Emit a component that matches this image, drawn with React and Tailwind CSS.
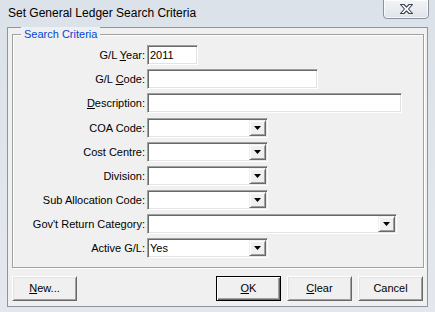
import React from "react";

const FONT = { fontFamily: '"Liberation Sans", Arial, sans-serif' };

const sunken =
  "border border-t-[#a0a0a0] border-l-[#a0a0a0] border-b-white border-r-white shadow-[inset_1px_1px_0_#696969,inset_-1px_-1px_0_#e3e3e3] bg-white";

const raised =
  "border border-t-white border-l-white border-b-[#696969] border-r-[#696969] shadow-[inset_1px_1px_0_#e3e3e3,inset_-1px_-1px_0_#a0a0a0] bg-[#f0f0f0]";

function Key({ children }) {
  return <span className="underline underline-offset-[1px]">{children}</span>;
}

function Row({ label, children, className = "" }) {
  return (
    <div className={`flex items-center h-[20px] ${className}`}>
      <div className="w-[133px] text-right leading-[20px] pr-[1px] whitespace-nowrap">{label}</div>
      <div className="ml-[1px] flex">{children}</div>
    </div>
  );
}

function TextBox({ width, value }) {
  return (
    <div className={`${sunken} h-[20px] pl-[2px] leading-[18px] ${width}`}>{value}</div>
  );
}

function Combo({ width, value }) {
  return (
    <div className={`${sunken} h-[20px] p-[1px] flex ${width}`}>
      <div className="flex-1 pl-[1px] leading-[16px]">{value}</div>
      <div className="w-[17px] h-[16px] border border-t-[#f0f0f0] border-l-[#f0f0f0] border-b-[#696969] border-r-[#696969] shadow-[inset_1px_1px_0_#fff,inset_-1px_-1px_0_#a0a0a0] bg-[#f0f0f0] flex items-center justify-center">
        <svg width="7" height="4" viewBox="0 0 7 4">
          <path d="M0 0h7L3.5 4z" fill="#000" />
        </svg>
      </div>
    </div>
  );
}

function Button({ children, isDefault }) {
  const cls = isDefault
    ? "border border-black shadow-[inset_1px_1px_0_#fff,inset_-1px_-1px_0_#696969,inset_-2px_-2px_0_#a0a0a0] bg-[#f0f0f0]"
    : raised;
  return (
    <button className={`${cls} w-[65px] h-[25px] flex items-center justify-center text-[11px] text-black`}>
      {children}
    </button>
  );
}

export default function App() {
  return (
    <div
      className="w-[435px] h-[312px] bg-gradient-to-b from-[#dce2e9] to-[#e4e8ee] flex flex-col pl-[7px] pr-[7px] pb-[5px] text-[11px] text-black overflow-hidden"
      style={FONT}
    >
      {/* title bar */}
      <div className="relative h-[27px] flex items-center">
        <span className="pl-[1px] pb-[1px] text-[12px]">Set General Ledger Search Criteria</span>
        <div className="absolute right-[-1px] top-[-1px] w-[46px] h-[20px] rounded-b-[4px] border border-[#8a929c] bg-gradient-to-b from-[#f3f5f7] to-[#dfe4ea] shadow-[inset_0_0_0_1px_rgba(255,255,255,0.7)] flex items-center justify-center">
          <svg width="15" height="12" viewBox="0 0 15 12">
            <path
              d="M1.5 1.5h3.5l2.5 2.6 2.5-2.6h3.5L9.5 6l4 4.5H10L7.5 7.9 5 10.5H1.5l4-4.5z"
              fill="#fff"
              stroke="#3c4452"
              strokeWidth="1.1"
              strokeLinejoin="round"
            />
          </svg>
        </div>
      </div>

      {/* client area */}
      <div className="flex-1 border border-[#8f959c] bg-[#f0f0f0] pl-[4px] pr-[3px] pt-[6px] pb-[5px] flex flex-col">
        <div className="relative h-[234px] border border-[#a0a0a0] shadow-[1px_1px_0_#fff,inset_1px_1px_0_#fff] pt-[10px] flex flex-col gap-[4px]">
          <span className="absolute left-[8px] top-[-8px] px-[3px] bg-[#f0f0f0] text-[#0046d5] leading-[14px]">
            Search Criteria
          </span>
          <Row label={<>G/L <Key>Y</Key>ear:</>}>
            <TextBox width="w-[51px]" value="2011" />
          </Row>
          <Row label={<>G/L <Key>C</Key>ode:</>}>
            <TextBox width="w-[171px]" />
          </Row>
          <Row label={<><Key>D</Key>escription:</>}>
            <TextBox width="w-[255px]" />
          </Row>
          <Row label="COA Code:" className="mt-[1px]">
            <Combo width="w-[121px]" />
          </Row>
          <Row label="Cost Centre:">
            <Combo width="w-[121px]" />
          </Row>
          <Row label="Division:">
            <Combo width="w-[121px]" />
          </Row>
          <Row label="Sub Allocation Code:">
            <Combo width="w-[121px]" />
          </Row>
          <Row label="Gov't Return Category:">
            <Combo width="w-[250px]" />
          </Row>
          <Row label="Active G/L:">
            <Combo width="w-[121px]" value="Yes" />
          </Row>
        </div>

        <div className="mt-[8px] flex justify-between">
          <Button>
            <Key>N</Key>ew...
          </Button>
          <div className="flex gap-[6px] pr-[1px]">
            <Button isDefault>
              <Key>O</Key>K
            </Button>
            <Button>
              <Key>C</Key>lear
            </Button>
            <Button>Cancel</Button>
          </div>
        </div>
      </div>
    </div>
  );
}
